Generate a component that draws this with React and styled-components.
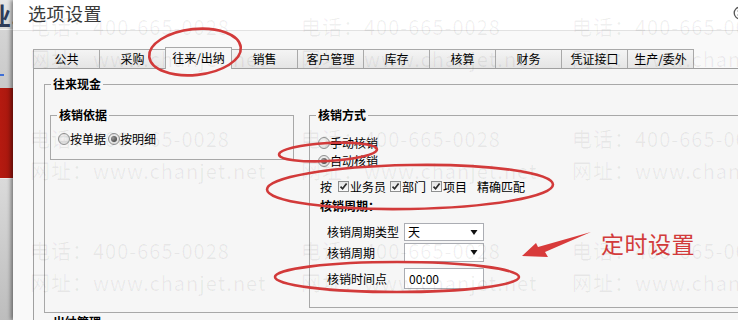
import React from "react";
import styled, { createGlobalStyle } from "styled-components";

const GlobalStyle = createGlobalStyle`
  html, body { margin: 0; padding: 0; background: #fff; }
  body {
    font-family: "Noto Sans CJK SC", "Microsoft YaHei", sans-serif;
    font-size: 12px;
    color: #000;
  }
  * { box-sizing: border-box; }
`;

const Screen = styled.div`
  position: relative;
  width: 738px;
  height: 320px;
  overflow: hidden;
  display: flex;
`;

/* ---------- background application strip ---------- */
const BackApp = styled.div`
  flex: none;
  width: 13px;
  display: flex;
  flex-direction: column;
  overflow: hidden;
`;
const BackHeader = styled.div`
  flex: none;
  height: 30px;
  background: linear-gradient(#e6e6e6, #d8d8d8);
  border-bottom: 1px solid #f2f2f2;
  display: flex;
  align-items: center;
`;
const BackGlyph = styled.span`
  margin-left: -13px;
  font-size: 24px;
  font-weight: bold;
  line-height: 28px;
  color: #2e3b58;
`;
const BackNav = styled.div`
  flex: none;
  height: 58px;
  background: linear-gradient(#d4d4d4, #c9c9c9);
  padding-top: 44px;
`;
const BackDash = styled.div`
  width: 4px;
  height: 2px;
  background: #3f6fd6;
`;
const BackRed = styled.div`
  flex: none;
  height: 90px;
  background: linear-gradient(90deg, #b51a10, #a4170e);
`;
const BackFooter = styled.div`
  flex: 1;
  background: linear-gradient(#dadada, #bdbdbd);
  border-top: 1px solid #ececec;
`;

/* ---------- dialog ---------- */
const Dialog = styled.div`
  flex: none;
  width: 770px;
  display: flex;
  flex-direction: column;
  background: #f9f9f9;
  box-shadow: -2px 0 4px rgba(0, 0, 0, 0.45);
  position: relative;
  z-index: 1;
`;
const TitleBar = styled.div`
  flex: none;
  height: 31px;
  background: #fff;
  border-bottom: 1px solid #e2e2e2;
  display: flex;
  align-items: flex-start;
  padding: 1px 36px 0 15px;
`;
const Title = styled.div`
  font-size: 18px;
  line-height: 24px;
  color: #3a3a3a;
  letter-spacing: 0.5px;
`;
const CloseBtn = styled.svg`
  margin-left: auto;
  margin-top: 5px;
  flex: none;
`;
const Body = styled.div`
  flex: none;
  padding: 16px 0 0 20px;
`;
const TabStrip = styled.div`
  display: flex;
  align-items: flex-end;
  height: 21px;
  position: relative;
  z-index: 2;
  padding-left: 1px;
`;
const Tab = styled.div`
  width: 67px;
  margin-left: -1px;
  height: ${(p) => (p.$active ? 22 : 19)}px;
  margin-bottom: ${(p) => (p.$active ? -1 : 0)}px;
  border: 1px solid #a9a9a9;
  border-bottom: 0;
  background: ${(p) =>
    p.$active ? "#f7f7f7" : "linear-gradient(#f4f4f4, #e5e5e5)"};
  text-align: center;
  font-size: 12px;
  line-height: 18px;
  padding-top: ${(p) => (p.$active ? 1 : 0)}px;
  position: relative;
  z-index: ${(p) => (p.$active ? 2 : 1)};
  white-space: nowrap;
`;
const Panel = styled.div`
  border-top: 1px solid #a0a0a0;
  border-left: 1px solid #a0a0a0;
  background: #f6f6f6;
  padding: 7px 0 0 10px;
`;

const Group = styled.fieldset`
  margin: 0;
  padding: 0;
  border: 1px solid #a8a8a8;
  min-width: 0;
  width: ${(p) => (p.$w ? `${p.$w}px` : "auto")};
  flex: ${(p) => (p.$w ? "none" : "1")};
`;
const GroupTitle = styled.legend`
  margin-left: 6px;
  padding: 0 2px;
  font-weight: bold;
  font-size: 12px;
  line-height: 16px;
`;
const GroupRow = styled.div`
  display: flex;
  align-items: flex-start;
  gap: 15px;
  padding: 15px 0 4px 5px;
`;
const BasisBody = styled.div`
  display: flex;
  align-items: center;
  height: 36px;
  padding: 0 0 4px 7px;
`;
const MethodBody = styled.div`
  display: flex;
  flex-direction: column;
  padding: 11px 0 18px 8px;
`;

const Option = styled.label`
  display: flex;
  align-items: center;
  height: 18px;
  line-height: 18px;
  white-space: nowrap;
  margin-left: ${(p) => p.$gap || 0}px;
`;
const RadioMark = styled.span`
  flex: none;
  width: 12px;
  height: 12px;
  border-radius: 50%;
  border: 1px solid #8f9090;
  background: radial-gradient(circle at 45% 40%, #f7f7f7 0, #d6d6d6 100%);
  display: inline-flex;
  align-items: center;
  justify-content: center;
  &::after {
    content: "";
    width: 6px;
    height: 6px;
    border-radius: 50%;
    background: ${(p) =>
      p.$checked
        ? "radial-gradient(circle at 35% 35%, #9a9a9a, #333)"
        : "transparent"};
  }
`;
const CheckRow = styled.div`
  display: flex;
  align-items: center;
  height: 18px;
  margin-top: 7px;
  padding-left: 2px;
  white-space: nowrap;
`;
const CheckItem = styled.span`
  display: inline-flex;
  align-items: center;
  gap: 1px;
  margin-left: ${(p) => p.$gap}px;
`;
const CheckBox = styled.span`
  flex: none;
  width: 11px;
  height: 11px;
  border: 1px solid #8e8f8f;
  background: linear-gradient(#e4e4e4, #fbfbfb);
  display: inline-flex;
  align-items: center;
  justify-content: center;
`;
const PlainText = styled.span`
  margin-left: ${(p) => p.$gap || 0}px;
`;
const SubTitle = styled.div`
  margin-top: 2px;
  height: 18px;
  line-height: 18px;
  padding-left: 2px;
  font-weight: bold;
`;
const FieldRow = styled.div`
  display: grid;
  grid-template-columns: 77px 80px;
  align-items: center;
  padding-left: 9px;
  margin-top: ${(p) => p.$top}px;
`;
const FieldLabel = styled.span`
  line-height: 18px;
  white-space: nowrap;
`;
const FieldBox = styled.div`
  height: ${(p) => p.$h}px;
  border: 1px solid #abadb3;
  background: #fff;
  display: flex;
  align-items: center;
  justify-content: space-between;
  padding: 0 5px 0 3px;
  font-size: 12px;
  line-height: 16px;
`;

const NextGroupTitle = styled.div`
  margin: 1px 0 0 9px;
  font-weight: bold;
  line-height: 16px;
`;

/* ---------- overlays ---------- */
const Watermark = styled.div`
  position: absolute;
  left: 30px;
  top: 11px;
  display: grid;
  grid-template-columns: repeat(3, 271px);
  grid-auto-rows: 112px;
  pointer-events: none;
  z-index: 4;
`;
const WaterCell = styled.div`
  display: flex;
  flex-direction: column;
  font-size: 20px;
  line-height: 32px;
  color: rgba(0, 0, 0, 0.06);
  letter-spacing: 1px;
  white-space: nowrap;
`;
const Annotations = styled.svg`
  position: absolute;
  left: 0;
  top: 0;
  pointer-events: none;
  z-index: 5;
`;
const NoteText = styled.span`
  position: absolute;
  left: 601px;
  top: 228px;
  font-size: 23px;
  line-height: 30px;
  color: #d23b3b;
  z-index: 6;
  letter-spacing: 0.5px;
`;

const Check = () => (
  <CheckBox>
    <svg width="9" height="9" viewBox="0 0 9 9">
      <path d="M1.5 4.6 L3.6 6.8 L7.6 1.6" fill="none" stroke="#2b2b2b" strokeWidth="1.7" />
    </svg>
  </CheckBox>
);

const Arrow = () => (
  <svg width="8" height="7" viewBox="0 0 8 7">
    <path d="M0.5 1 L7.5 1 L4 6 Z" fill="#111" />
  </svg>
);

const tabs = ["公共", "采购", "往来/出纳", "销售", "客户管理", "库存", "核算", "财务", "凭证接口", "生产/委外"];

export default function App() {
  const cells = [];
  for (let r = 0; r < 3; r++) {
    for (let c = 0; c < 3; c++) {
      cells.push(
        <WaterCell key={`${r}-${c}`}>
          <span>电话：400-665-0028</span>
          <span>网址：www.chanjet.net</span>
        </WaterCell>
      );
    }
  }
  return (
    <>
      <GlobalStyle />
      <Screen>
        <BackApp>
          <BackHeader>
            <BackGlyph>业.</BackGlyph>
          </BackHeader>
          <BackNav>
            <BackDash />
          </BackNav>
          <BackRed />
          <BackFooter />
        </BackApp>

        <Dialog>
          <TitleBar>
            <Title>选项设置</Title>
            <CloseBtn width="14" height="14" viewBox="0 0 14 14">
              <circle cx="7" cy="7" r="5.8" fill="none" stroke="#555" strokeWidth="1.3" />
              <path d="M4.6 4.6 L9.4 9.4 M9.4 4.6 L4.6 9.4" stroke="#555" strokeWidth="1.2" />
            </CloseBtn>
          </TitleBar>
          <Body>
            <TabStrip>
              {tabs.map((t) => (
                <Tab key={t} $active={t === "往来/出纳"}>
                  {t}
                </Tab>
              ))}
            </TabStrip>
            <Panel>
              <Group>
                <GroupTitle>往来现金</GroupTitle>
                <GroupRow>
                  <Group $w={244}>
                    <GroupTitle>核销依据</GroupTitle>
                    <BasisBody>
                      <Option>
                        <RadioMark />
                        按单据
                      </Option>
                      <Option $gap={2}>
                        <RadioMark $checked />
                        按明细
                      </Option>
                    </BasisBody>
                  </Group>
                  <Group>
                    <GroupTitle>核销方式</GroupTitle>
                    <MethodBody>
                      <Option>
                        <RadioMark />
                        手动核销
                      </Option>
                      <Option>
                        <RadioMark $checked />
                        自动核销
                      </Option>
                      <CheckRow>
                        <PlainText>按</PlainText>
                        <CheckItem $gap={6}>
                          <Check />
                          业务员
                        </CheckItem>
                        <CheckItem $gap={4}>
                          <Check />
                          部门
                        </CheckItem>
                        <CheckItem $gap={5}>
                          <Check />
                          项目
                        </CheckItem>
                        <PlainText $gap={10}>精确匹配</PlainText>
                      </CheckRow>
                      <SubTitle>核销周期：</SubTitle>
                      <FieldRow $top={8}>
                        <FieldLabel>核销周期类型</FieldLabel>
                        <FieldBox $h={18}>
                          <span>天</span>
                          <Arrow />
                        </FieldBox>
                      </FieldRow>
                      <FieldRow $top={2}>
                        <FieldLabel>核销周期</FieldLabel>
                        <FieldBox $h={19}>
                          <span />
                          <Arrow />
                        </FieldBox>
                      </FieldRow>
                      <FieldRow $top={6}>
                        <FieldLabel>核销时间点</FieldLabel>
                        <FieldBox $h={21}>
                          <span style={{ paddingLeft: 1 }}>00:00</span>
                        </FieldBox>
                      </FieldRow>
                    </MethodBody>
                  </Group>
                </GroupRow>
              </Group>
              <NextGroupTitle>出纳管理</NextGroupTitle>
            </Panel>
          </Body>
        </Dialog>

        <Watermark>{cells}</Watermark>

        <Annotations width="738" height="320" viewBox="0 0 738 320">
          <g fill="none" stroke="#d23a3a" strokeWidth="2.6">
            <ellipse cx="195" cy="52" rx="46" ry="23" transform="rotate(-6 195 52)" />
            <ellipse cx="328" cy="152" rx="49" ry="9" transform="rotate(-3 328 152)" />
            <ellipse cx="410" cy="187" rx="143" ry="22" transform="rotate(-1 410 187)" />
            <ellipse cx="397" cy="277" rx="122" ry="15" />
          </g>
          <path d="M522 256 L536 243 L538 247 L591 232 L545 252 L548 257 Z" fill="#d83b3b" />
        </Annotations>
        <NoteText>定时设置</NoteText>
      </Screen>
    </>
  );
}
